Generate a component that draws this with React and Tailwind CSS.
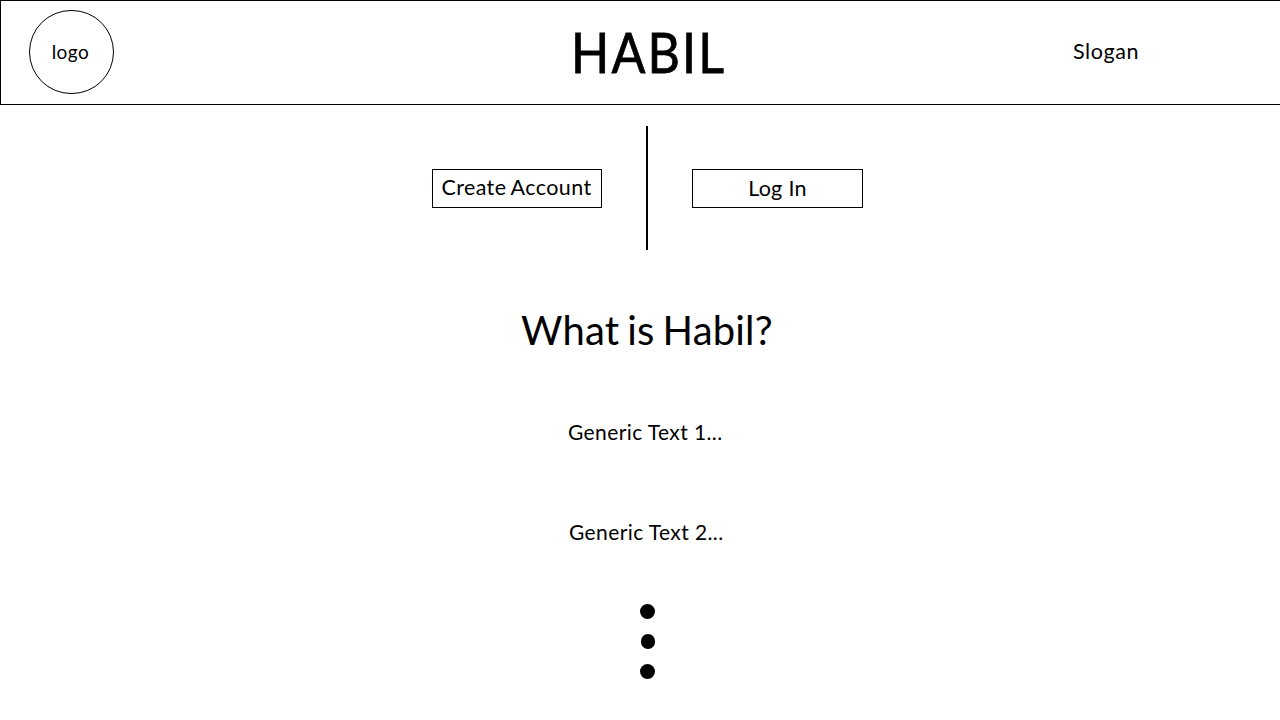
function Dot({ className = "w-[15px]" }) {
  return <span className={`block h-[15px] rounded-full bg-black ${className}`} />;
}

function Header() {
  return (
    <header className="flex h-[105px] shrink-0 items-start border-y border-l border-black">
      <div className="mt-[9px] ml-7 flex h-[84px] w-[85px] justify-center rounded-full border border-black pt-[29px] text-[19px] leading-[24px] tracking-[0.5px]">
        <span className="-ml-[2px]">logo</span>
      </div>
      <h1 className="mt-[15px] ml-[457px] w-[160px] origin-left scale-x-[0.88] text-[57px] leading-[70px] tracking-[2.4px] [-webkit-text-stroke:0.8px_black]">
        HABIL
      </h1>
      <p className="mt-[38px] ml-[342px] text-[21.5px] leading-[24px] tracking-[0.6px]">Slogan</p>
    </header>
  );
}

export default function App() {
  return (
    <div className="flex h-[720px] w-[1280px] flex-col overflow-hidden bg-white font-['Lato',sans-serif] whitespace-nowrap text-black">
      <Header />
      <section className="mt-[21px] flex h-[124px] shrink-0 items-start pl-[432px]">
        <button className="mt-[43px] h-[39px] w-[170px] border border-black pr-[1px] pb-[4px] text-[21.5px] leading-[24px] tracking-[0.4px] [word-spacing:-1px]">
          Create Account
        </button>
        <div className="ml-11 h-[124px] w-[2px] bg-black" />
        <button className="mt-[43px] ml-11 h-[39px] w-[171px] border border-black pb-[2px] text-[21.5px] leading-[24px] tracking-[0.3px]">
          Log In
        </button>
      </section>
      <main className="flex flex-col items-start">
        <h2 className="mt-[55px] ml-[521px] text-[40px] leading-[50px] tracking-[0.2px] [word-spacing:-2.5px]">What is Habil?</h2>
        <p className="mt-[65px] ml-[568px] text-[21px] leading-[24px] tracking-[0.4px]">Generic Text 1...</p>
        <p className="mt-[76px] ml-[569px] text-[21px] leading-[24px] tracking-[0.4px]">Generic Text 2...</p>
        <div className="mt-[60px] ml-[640px] flex flex-col gap-[15px]">
          <Dot />
          <Dot className="ml-px w-[14px]" />
          <Dot />
        </div>
      </main>
    </div>
  );
}
